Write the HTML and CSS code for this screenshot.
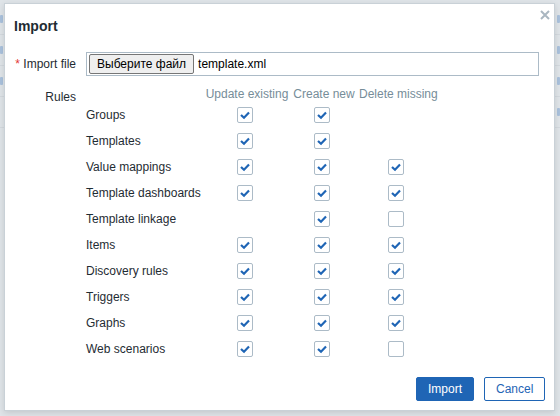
FILE: index.html
```html
<!DOCTYPE html>
<html>
<head>
<meta charset="utf-8">
<link rel="stylesheet" href="styles.css">
</head>
<body>
<div class="page">
  <div class="bg-row"><span class="bg-l"></span><span class="bg-r"></span></div>
  <div class="bg-row"><span class="bg-l"></span><span class="bg-r"></span></div>
  <div class="bg-row"><span class="bg-l"></span><span class="bg-r"></span></div>
  <div class="bg-row"><span class="bg-l bg-none"></span><span class="bg-r"></span></div>
</div>

<div class="dialog">
  <div class="dlg-head">
    <h4 class="dlg-title">Import</h4>
    <button class="dlg-close" aria-label="Close">
      <svg width="10" height="10" viewBox="0 0 10 10"><path d="M1 1 L9 9 M9 1 L1 9" stroke="#a9b6c0" stroke-width="2" fill="none"/></svg>
    </button>
  </div>
  <div class="dlg-body">
    <div class="form">
      <div class="lbl"><span class="req">*</span> Import file</div>
      <div class="field">
        <div class="file-input">
          <button class="file-btn">Выберите файл</button>
          <span class="file-name">template.xml</span>
        </div>
      </div>

      <div class="lbl lbl-rules">Rules</div>
      <div class="field">
        <div class="rules">
          <div class="th name"></div>
          <div class="th">Update existing</div>
          <div class="th">Create new</div>
          <div class="th">Delete missing</div>

          <div class="td name">Groups</div>
          <div class="td"><span class="cb on"></span></div>
          <div class="td"><span class="cb on"></span></div>
          <div class="td"></div>

          <div class="td name">Templates</div>
          <div class="td"><span class="cb on"></span></div>
          <div class="td"><span class="cb on"></span></div>
          <div class="td"></div>

          <div class="td name">Value mappings</div>
          <div class="td"><span class="cb on"></span></div>
          <div class="td"><span class="cb on"></span></div>
          <div class="td"><span class="cb on"></span></div>

          <div class="td name">Template dashboards</div>
          <div class="td"><span class="cb on"></span></div>
          <div class="td"><span class="cb on"></span></div>
          <div class="td"><span class="cb on"></span></div>

          <div class="td name">Template linkage</div>
          <div class="td"></div>
          <div class="td"><span class="cb on"></span></div>
          <div class="td"><span class="cb"></span></div>

          <div class="td name">Items</div>
          <div class="td"><span class="cb on"></span></div>
          <div class="td"><span class="cb on"></span></div>
          <div class="td"><span class="cb on"></span></div>

          <div class="td name">Discovery rules</div>
          <div class="td"><span class="cb on"></span></div>
          <div class="td"><span class="cb on"></span></div>
          <div class="td"><span class="cb on"></span></div>

          <div class="td name">Triggers</div>
          <div class="td"><span class="cb on"></span></div>
          <div class="td"><span class="cb on"></span></div>
          <div class="td"><span class="cb on"></span></div>

          <div class="td name">Graphs</div>
          <div class="td"><span class="cb on"></span></div>
          <div class="td"><span class="cb on"></span></div>
          <div class="td"><span class="cb on"></span></div>

          <div class="td name">Web scenarios</div>
          <div class="td"><span class="cb on"></span></div>
          <div class="td"><span class="cb on"></span></div>
          <div class="td"><span class="cb"></span></div>
        </div>
      </div>
    </div>
  </div>
  <div class="dlg-foot">
    <button class="btn btn-primary">Import</button>
    <button class="btn btn-alt">Cancel</button>
  </div>
</div>
</body>
</html>
```

FILE: styles.css
```css
html, body {
  margin: 0;
  padding: 0;
}
body {
  width: 560px;
  height: 416px;
  overflow: hidden;
  background: #dfe4e8;
  font-family: "Liberation Sans", Arial, sans-serif;
  font-size: 12px;
  color: #1f2c33;
  position: relative;
}

.page {
  padding-top: 4px;
}
.bg-row {
  height: 30px;
  border-bottom: 1px solid #d3d9de;
  display: flex;
  justify-content: space-between;
  align-items: center;
}
.bg-l, .bg-r {
  display: block;
  width: 3px;
  height: 8px;
  background: #a9c1dc;
  border-radius: 1px;
}
.bg-none { background: transparent; }

.dialog {
  position: absolute;
  left: 4px;
  top: 3px;
  width: 549px;
  height: 406px;
  background: #fff;
  border: 1px solid #c9d1d7;
  box-shadow: 0 2px 6px rgba(0,0,0,0.12);
  display: flex;
  flex-direction: column;
}

.dlg-head {
  height: 43px;
  display: flex;
  align-items: center;
  padding: 0 9px;
  position: relative;
}
.dlg-title {
  margin: 0;
  font-size: 14px;
  font-weight: bold;
  color: #1f2c33;
}
.dlg-close {
  position: absolute;
  right: 2px;
  top: 4px;
  width: 14px;
  height: 14px;
  padding: 0;
  border: 0;
  background: none;
  display: flex;
  align-items: center;
  justify-content: center;
}

.dlg-body {
  padding: 5px 15px 0 9px;
}
.form {
  display: grid;
  grid-template-columns: 62px 1fr;
  column-gap: 10px;
  row-gap: 10px;
}
.lbl {
  text-align: right;
  line-height: 24px;
  white-space: nowrap;
}
.req {
  color: #e33734;
}
.lbl-rules {
  line-height: 14px;
  padding-top: 4px;
}

.file-input {
  height: 22px;
  border: 1px solid #acbbc7;
  display: flex;
  align-items: center;
  padding-left: 2px;
}
.file-btn {
  height: 20px;
  margin: 0;
  padding: 0 7px;
  font-family: "Liberation Sans", Arial, sans-serif;
  font-size: 12px;
  color: #000;
  background: #efefef;
  border: 1px solid #767676;
  border-radius: 2px;
}
.file-name {
  margin-left: 4px;
  color: #000;
}

.rules {
  display: grid;
  grid-template-columns: 119px 88px 66px 79px;
  grid-auto-rows: 26px;
  grid-template-rows: 16px;
}
.th {
  color: #768d99;
  line-height: 16px;
  text-align: center;
  padding-right: 4px;
  white-space: nowrap;
}
.rules .th:last-child { padding-right: 0; }
.td {
  display: flex;
  align-items: center;
  justify-content: center;
  padding-right: 9px;
}
.td:nth-child(4n) { padding-right: 6px; }
.td.name, .th.name {
  justify-content: flex-start;
  text-align: left;
  padding-right: 0;
}

.cb {
  box-sizing: border-box;
  width: 16px;
  height: 16px;
  border: 1px solid #acbbc7;
  border-radius: 2px;
  background: #fff;
  display: inline-block;
}
.cb.on {
  background: #fff url("data:image/svg+xml,%3Csvg xmlns='http://www.w3.org/2000/svg' width='14' height='14' viewBox='0 0 14 14'%3E%3Cpath d='M3 7 L6 9.8 L11 4.6' stroke='%231f65b5' stroke-width='2.2' fill='none'/%3E%3C/svg%3E") no-repeat center;
}

.dlg-foot {
  margin-top: auto;
  display: flex;
  justify-content: flex-end;
  gap: 10px;
  padding: 0 9px 9px 0;
}
.btn {
  height: 24px;
  padding: 0 11px;
  font-family: "Liberation Sans", Arial, sans-serif;
  font-size: 12px;
  border-radius: 2px;
  box-sizing: border-box;
}
.btn-primary {
  background: #1f65b5;
  border: 1px solid #1f65b5;
  color: #fff;
  width: 58px;
}
.btn-alt {
  background: #fff;
  border: 1px solid #1f65b5;
  color: #1f65b5;
  width: 61px;
}
```
